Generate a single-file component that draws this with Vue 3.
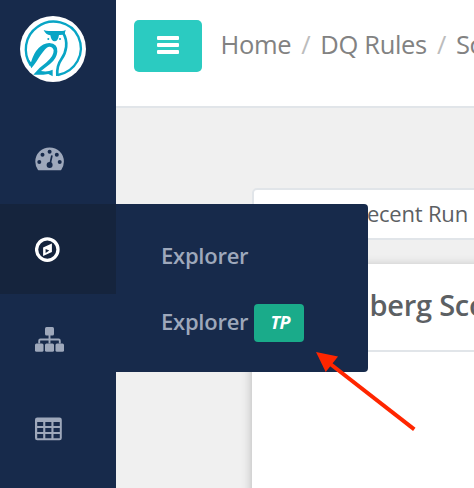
<script setup>
const crumbs = ['Home', 'DQ Rules', 'Score']
</script>

<template>
  <div class="app">
    <aside class="sidebar">
      <div class="brand">
        <svg width="66" height="66" viewBox="60 48 198 198">
          <circle cx="159" cy="147" r="99" fill="#fff" />
          <g fill="none" stroke="#08a5c5" stroke-width="7">
            <path d="M92 196C68 160 73 108 112 81C153 50 214 65 235 110C258 162 226 214 174 225" />
            <path d="M189 98C206 126 199 157 184 178C173 193 170 206 172 228" stroke-width="8" />
          </g>
          <g fill="#08a5c5">
            <path d="M78 168L93 187Q109 132 148 129Q174 131 172 155Q170 176 150 192Q133 205 123 213Q143 217 158 209L158 229L145 222L130 224L100 224Q115 204 138 188Q162 169 161 151Q158 139 147 140C132 143 116 178 94 205Z" />
            <path d="M131 90Q139 94 151 93L183 93Q192 94 197 89L194 101Q187 106 177 105Q174 124 164 124Q154 124 151 106Q137 104 131 90Z" />
            <circle cx="145" cy="117" r="3" />
            <circle cx="180" cy="117" r="3" />
          </g>
        </svg>
      </div>
      <nav>
        <a class="nav-item">
          <svg width="30" height="24" viewBox="0 0 30 24">
            <path fill="#9ea8bb" fill-rule="evenodd" d="M3 23Q0.3 19 0.3 14.7A14.3 14.3 0 0 1 28.9 14.7Q28.9 19 26.2 23Q25.8 23.3 25 23.3H4.2Q3.4 23.3 3 23ZM14.6 2.8a2 2 0 1 0 0 4a2 2 0 1 0 0-4M7.5 5.8a2 2 0 1 0 0 4a2 2 0 1 0 0-4M4.3 13.1a2 2 0 1 0 0 4a2 2 0 1 0 0-4M24.7 13.1a2 2 0 1 0 0 4a2 2 0 1 0 0-4M21.8 5.8a2 2 0 1 0 0 4a2 2 0 1 0 0-4" />
            <path d="M16.8 9L14.9 18" stroke="#172a4b" stroke-width="1.7" stroke-linecap="round" />
            <circle cx="14.6" cy="18" r="3" fill="#172a4b" />
          </svg>
        </a>
        <a class="nav-item active">
          <svg width="25" height="25" viewBox="0 0 25 25">
            <circle cx="12.3" cy="12.6" r="10.7" fill="none" stroke="#fff" stroke-width="3.3" />
            <path fill="#fff" fill-rule="evenodd" d="M8.1 10.4L16.9 6.5V14.9L8.1 19ZM10.6 12V16L14.3 13.6Z" />
          </svg>
        </a>
        <a class="nav-item">
          <svg width="29" height="26" viewBox="0 0 29 26" fill="#9ea8bb">
            <rect x="10" y="1" width="9" height="8.5" rx="1.5" />
            <rect x="0" y="17.4" width="8.5" height="8.3" rx="1.5" />
            <rect x="10" y="17.4" width="9" height="8.3" rx="1.5" />
            <rect x="20.5" y="17.4" width="8.5" height="8.3" rx="1.5" />
            <path d="M14.5 9V17.6M4.2 17.6V14.7Q4.2 13.5 5.4 13.5H23.6Q24.8 13.5 24.8 14.7V17.6" fill="none" stroke="#9ea8bb" stroke-width="1.9" />
          </svg>
        </a>
        <a class="nav-item">
          <svg width="27" height="24" viewBox="0 0 27 24">
            <path fill="#9ea8bb" fill-rule="evenodd" d="M2.3 0.5H24.5Q26.8 0.5 26.8 2.8V21Q26.8 23.3 24.5 23.3H2.3Q0 23.3 0 21V2.8Q0 0.5 2.3 0.5ZM2.2 5H8.2V9H2.2ZM10.3 5H16.4V9H10.3ZM18.5 5H24.8V9H18.5ZM2.2 11H8.2V15H2.2ZM10.3 11H16.4V15H10.3ZM18.5 11H24.8V15H18.5ZM2.2 17.1H8.2V21.2H2.2ZM10.3 17.1H16.4V21.2H10.3ZM18.5 17.1H24.8V21.2H18.5Z" />
          </svg>
        </a>
      </nav>
    </aside>

    <main class="main">
      <header class="topbar">
        <button class="menu-button" aria-label="Menu"><i></i><i></i><i></i></button>
        <div class="breadcrumb">
          <template v-for="(crumb, index) in crumbs" :key="crumb">
            <b v-if="index">/</b>
            <span>{{ crumb }}</span>
          </template>
        </div>
      </header>
      <section class="content">
        <div class="run-select">Recent Run</div>
        <article class="card">
          <h2>berg Score</h2>
        </article>
      </section>
    </main>

    <div class="submenu">
      <a>Explorer</a>
      <a>Explorer<em>TP</em></a>
    </div>

    <svg class="arrow" width="100" height="80" viewBox="316 352 100 80">
      <path d="M414.3 429.3L331 364.5" stroke="#ff2600" stroke-width="4" />
      <path d="M316 352L338 356.4L325.7 372Z" fill="#ff2600" />
    </svg>
  </div>
</template>

<style>
body {
  margin: 0;
  overflow: hidden;
}
</style>

<style scoped>
.app {
  position: relative;
  display: flex;
  width: 474px;
  height: 488px;
  overflow: hidden;
  background: #f0f0f0;
  font-family: "Open Sans", sans-serif;
}
.sidebar {
  width: 116px;
  flex: none;
  background: #172a4b;
}
.brand {
  box-sizing: content-box;
  height: 98px;
  padding: 16px 0 0 20px;
}
.brand svg,
.nav-item svg {
  display: block;
}
.nav-item {
  display: flex;
  align-items: center;
  height: 90px;
  padding-left: 35px;
}
.nav-item.active {
  background: #15243d;
}
.main {
  flex: 1;
  min-width: 0;
}
.topbar {
  display: flex;
  align-items: flex-start;
  box-sizing: border-box;
  height: 108px;
  padding: 20px 0 0 18px;
  border-bottom: 2px solid #e1e5e9;
  background: #fff;
}
.menu-button {
  display: flex;
  flex: none;
  flex-direction: column;
  align-items: center;
  justify-content: center;
  gap: 3px;
  width: 68px;
  height: 52px;
  padding: 0 0 2px;
  border: 0;
  border-radius: 5px;
  background: #2bcbc1;
}
.menu-button i {
  width: 22px;
  height: 4px;
  border-radius: 1px;
  background: #fff;
}
.breadcrumb {
  display: flex;
  gap: 10px;
  padding: 6px 0 0 18.5px;
  color: #828282;
  font-size: 25.5px;
  letter-spacing: -0.33px;
  line-height: 36px;
  white-space: nowrap;
}
.breadcrumb b {
  color: #bcbcbc;
  font-weight: 400;
}
.content {
  padding: 80px 0 0 136px;
}
.run-select {
  box-sizing: border-box;
  width: 300px;
  height: 52px;
  padding-left: 99.5px;
  border: 2px solid #e1e5e9;
  border-radius: 5px;
  background: #fff;
  color: #5c6063;
  font-size: 22px;
  letter-spacing: -0.2px;
  line-height: 46px;
}
.card {
  width: 300px;
  height: 260px;
  margin-top: 24px;
  background: #fff;
  box-shadow: 0 2px 10px rgba(0, 0, 0, 0.25);
}
.card h2 {
  box-sizing: border-box;
  height: 88px;
  margin: 0;
  padding-left: 117.5px;
  border-bottom: 2px solid #e1e5e9;
  color: #5c6063;
  font-size: 29px;
  font-weight: 600;
  letter-spacing: -0.25px;
  line-height: 82px;
  white-space: nowrap;
}
.submenu {
  position: absolute;
  top: 204px;
  left: 116px;
  box-sizing: border-box;
  width: 252px;
  height: 168px;
  padding: 19px 0 0 45px;
  border-radius: 0 4px 4px 0;
  background: #172a4b;
  color: #9ea8bb;
  font-size: 22px;
  font-weight: 600;
  letter-spacing: -0.25px;
}
.submenu a {
  display: flex;
  align-items: center;
  gap: 6px;
  height: 66px;
  line-height: 28px;
  padding-bottom: 2px;
  box-sizing: border-box;
}
.submenu em {
  box-sizing: border-box;
  width: 50px;
  height: 38px;
  margin-top: 4px;
  padding-left: 2px;
  border-radius: 4px;
  background: #1aab8a;
  color: #fff;
  font-size: 18px;
  font-weight: 700;
  letter-spacing: -0.4px;
  line-height: 37px;
  text-align: center;
}
.arrow {
  position: absolute;
  top: 352px;
  left: 316px;
}
</style>
